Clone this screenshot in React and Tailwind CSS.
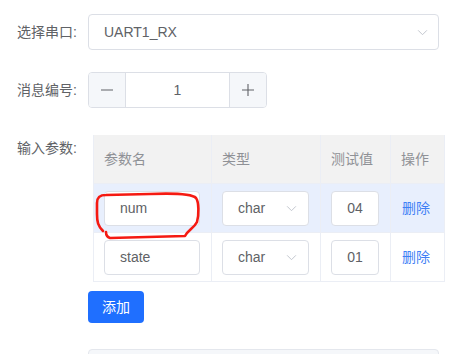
import React from "react";

const font = { fontFamily: '"Liberation Sans", "Noto Sans CJK SC", sans-serif' };

function Chevron({ className }) {
  return (
    <svg viewBox="0 0 12 8" className={className} fill="none" stroke="currentColor" strokeWidth="1.1">
      <path d="M1 1.5 L6 6.5 L11 1.5" />
    </svg>
  );
}

function Label({ children }) {
  return (
    <div className="w-[88px] shrink-0 pl-[17px] text-[14px] leading-[36px] text-[#606266]">
      {children}
    </div>
  );
}

const rows = [
  { name: "num", type: "char", value: "04", active: true },
  { name: "state", type: "char", value: "01", active: false },
];

export default function App() {
  return (
    <div className="relative h-[354px] w-[475px] overflow-hidden bg-white pt-[14px]" style={font}>
      <div className="flex items-start">
        <Label>选择串口:</Label>
        <div className="flex h-[36px] w-[351px] items-center justify-between rounded-[4px] border border-[#dcdfe6] pl-[15px] pr-[10px] text-[14px] text-[#606266]">
          <span>UART1_RX</span>
          <Chevron className="h-[7px] w-[11px] text-[#c0c4cc]" />
        </div>
      </div>

      <div className="mt-[22px] flex items-start">
        <Label>消息编号:</Label>
        <div className="flex h-[36px] w-[179px] overflow-hidden rounded-[4px] border border-[#dcdfe6] text-[14px] text-[#606266]">
          <div className="flex w-[37px] items-center justify-center border-r border-[#dcdfe6] bg-[#f5f7fa]">
            <svg viewBox="0 0 14 14" className="h-[14px] w-[14px]" stroke="#606266" strokeWidth="1.1">
              <path d="M1 7 H13" />
            </svg>
          </div>
          <div className="flex flex-1 items-center justify-center">1</div>
          <div className="flex w-[37px] items-center justify-center border-l border-[#dcdfe6] bg-[#f5f7fa]">
            <svg viewBox="0 0 14 14" className="h-[14px] w-[14px]" stroke="#606266" strokeWidth="1.1">
              <path d="M1 7 H13 M7 1 V13" />
            </svg>
          </div>
        </div>
      </div>

      <div className="mt-[22px] flex items-start">
        <Label>输入参数:</Label>
        <div className="flex flex-col">
          <div className="ml-[5px] mt-[5px] grid w-[351px] grid-cols-[118px_109px_70px_54px] border-l border-[#ebeef5] text-[14px]">
            {["参数名", "类型", "测试值", "操作"].map((h) => (
              <div
                key={h}
                className="flex h-[49px] items-center border-r border-b border-[#ebeef5] bg-[#f2f2f2] pl-[10px] text-[#8f9196]"
              >
                {h}
              </div>
            ))}
            {rows.map((r) => (
              <React.Fragment key={r.name}>
                <div className={`flex h-[49px] items-center border-r border-b border-[#ebeef5] pl-[10px] ${r.active ? "bg-[#e8effd]" : "bg-white"}`}>
                  <div className="flex h-[35px] w-[96px] items-center rounded-[4px] border border-[#dcdfe6] bg-white pl-[15px] text-[#606266]">
                    {r.name}
                  </div>
                </div>
                <div className={`flex h-[49px] items-center border-r border-b border-[#ebeef5] pl-[10px] ${r.active ? "bg-[#e8effd]" : "bg-white"}`}>
                  <div className="flex h-[35px] w-[87px] items-center justify-between rounded-[4px] border border-[#dcdfe6] bg-white pl-[15px] pr-[11px] text-[#606266]">
                    <span>{r.type}</span>
                    <Chevron className="h-[7px] w-[11px] text-[#c0c4cc]" />
                  </div>
                </div>
                <div className={`flex h-[49px] items-center border-r border-b border-[#ebeef5] pl-[10px] ${r.active ? "bg-[#e8effd]" : "bg-white"}`}>
                  <div className="flex h-[35px] w-[48px] items-center justify-center rounded-[4px] border border-[#dcdfe6] bg-white text-[#606266]">
                    {r.value}
                  </div>
                </div>
                <div className={`flex h-[49px] items-center border-r border-b border-[#ebeef5] pl-[11px] text-[#3f7ff5] ${r.active ? "bg-[#e8effd]" : "bg-white"}`}>
                  删除
                </div>
              </React.Fragment>
            ))}
          </div>
          <button className="mt-[9px] flex h-[32px] w-[56px] items-center justify-center rounded-[4px] bg-[#1f6fff] text-[14px] text-white">
            添加
          </button>
          <div className="mt-[26px] h-[30px] w-[351px] rounded-t-[4px] border border-[#e4e7ed] bg-[#f5f7fa]" />
        </div>
      </div>

      <svg className="pointer-events-none absolute left-0 top-0" width="475" height="354" fill="none">
        <path
          d="M103 231 C98 226 97 222 97 214 L97 203 C97 197 100 195 106 195 L150 194 C175 193 192 194 196 198 C199 202 199 215 197 222 C194 228 188 230 185 236 L110 238 C107 237 106 235 106 232"
          stroke="#f51a12"
          strokeWidth="2.6"
          strokeLinecap="round"
          strokeLinejoin="round"
        />
      </svg>
    </div>
  );
}
